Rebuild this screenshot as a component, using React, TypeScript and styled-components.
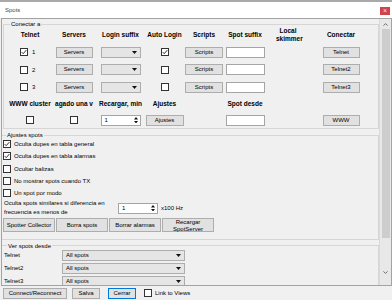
import React from 'react'
import styled, { createGlobalStyle } from 'styled-components'

const GlobalStyle = createGlobalStyle`
  html, body {
    margin: 0;
    padding: 0;
    background: #f0f0f0;
  }
  body {
    font-family: "Liberation Sans", Arial, sans-serif;
    font-size: 6px;
    color: #000;
  }
  * {
    box-sizing: border-box;
  }
`

const Check: React.FC = () => (
  <svg width="6" height="6" viewBox="0 0 6 6">
    <polyline points="0.7,3.1 2.2,4.7 5.3,1.1" fill="none" stroke="#1e1e1e" strokeWidth="0.9" />
  </svg>
)

const Arrow: React.FC<{ up?: boolean }> = ({ up }) => (
  <svg width="5" height="3" viewBox="0 0 5 3">
    <path d={up ? 'M0 3h5L2.5 0z' : 'M0 0h5L2.5 3z'} fill="#111" />
  </svg>
)

const Chevron: React.FC<{ up?: boolean }> = ({ up }) => (
  <svg width="5" height="3" viewBox="0 0 5 3">
    <polyline points={up ? '0.5,2.6 2.5,0.6 4.5,2.6' : '0.5,0.4 2.5,2.4 4.5,0.4'} fill="none" stroke="#606060" strokeWidth="0.9" />
  </svg>
)

const CheckBox: React.FC<{ checked?: boolean }> = ({ checked }) => <Box>{checked && <Check />}</Box>

const ComboBox: React.FC<{ w: number; value?: string }> = ({ w, value }) => (
  <Combo $w={w}>
    <span>{value}</span>
    <Arrow />
  </Combo>
)

const Numeric: React.FC<{ value: string }> = ({ value }) => (
  <NumericBox>
    <span>{value}</span>
    <Spinner>
      <Arrow up />
      <Arrow />
    </Spinner>
  </NumericBox>
)

const telnets = [
  { n: 1, on: true, auto: true },
  { n: 2, on: false, auto: false },
  { n: 3, on: false, auto: false },
]

const options = [
  { label: 'Oculta dupes en tabla general', checked: true },
  { label: 'Oculta dupes en tabla alarmas', checked: true },
  { label: 'Ocultar balizas', checked: false },
  { label: 'No mostrar spots cuando TX', checked: false },
  { label: 'Un spot por modo', checked: false },
]

const App: React.FC = () => (
  <Window>
    <GlobalStyle />
    <TitleBar>
      <span>Spots</span>
      <CloseButton>×</CloseButton>
    </TitleBar>

    <ScrollPanel>
      <Content>
        <ConnectGroup>
          <Legend $indent={2}>Conectar a</Legend>
          <ConnectGrid>
            <Header>Telnet</Header>
            <Header>Servers</Header>
            <Header>Login suffix</Header>
            <Header>Auto Login</Header>
            <Header>Scripts</Header>
            <Header>Spot suffix</Header>
            <Header $wrap>Local skimmer</Header>
            <Header>Conectar</Header>

            {telnets.map(t => (
              <React.Fragment key={t.n}>
                <TelnetCell>
                  <CheckBox checked={t.on} />
                  <span>{t.n}</span>
                </TelnetCell>
                <Button $w={37}>Servers</Button>
                <ComboBox w={40} />
                <CheckBox checked={t.auto} />
                <Button $w={38}>Scripts</Button>
                <TextBox $w={39} />
                <span />
                <Button $w={37}>{t.n === 1 ? 'Telnet' : `Telnet${t.n}`}</Button>
              </React.Fragment>
            ))}

            <Header>WWW cluster</Header>
            <Header>agado una v</Header>
            <Header>Recargar, min</Header>
            <Header>Ajustes</Header>
            <span />
            <Header>Spot desde</Header>
            <span />
            <span />

            <CheckBox />
            <CheckBox />
            <Numeric value="1" />
            <Button $w={38}>Ajustes</Button>
            <span />
            <TextBox $w={39} />
            <span />
            <Button $w={37}>WWW</Button>
          </ConnectGrid>
        </ConnectGroup>

        <FlatGroup $gap={3} $bottom={6}>
          <Legend $indent={3}>Ajustes spots</Legend>
          {options.map(o => (
            <CheckRow key={o.label}>
              <CheckBox checked={o.checked} />
              <span>{o.label}</span>
            </CheckRow>
          ))}
          <SimilarRow>
            <SimilarLabel>Oculta spots similares si diferencia en frecuencia es menos de</SimilarLabel>
            <Numeric value="1" />
            <span>x100 Hz</span>
          </SimilarRow>
          <ActionRow>
            <Button $w={52} $h={14}>Spotter Collector</Button>
            <Button $w={52} $h={14}>Borra spots</Button>
            <Button $w={52} $h={14}>Borrar alarmas</Button>
            <Button $w={52} $h={14}>Recargar SpotServer</Button>
          </ActionRow>
        </FlatGroup>

        <FlatGroup $gap={2.5} $bottom={0}>
          <Legend $indent={4}>Ver spots desde</Legend>
          {['Telnet', 'Telnet2', 'Telnet3'].map(name => (
            <SourceRow key={name}>
              <SourceLabel>{name}</SourceLabel>
              <ComboBox w={123} value="All spots" />
            </SourceRow>
          ))}
        </FlatGroup>
      </Content>

      <ScrollBar>
        <ScrollArrow>
          <Chevron up />
        </ScrollArrow>
        <Thumb />
        <Track />
        <ScrollArrow>
          <Chevron />
        </ScrollArrow>
      </ScrollBar>
    </ScrollPanel>

    <BottomBar>
      <Button $w={64}>Connect/Reconnect</Button>
      <Button $w={28} style={{ marginLeft: 5 }}>Salva</Button>
      <Button $w={28} $default style={{ marginLeft: 8 }}>Cerrar</Button>
      <LinkCheck>
        <CheckBox />
        <span>Link to Views</span>
      </LinkCheck>
    </BottomBar>
  </Window>
)

export default App

const Window = styled('div')`
  width: 392px;
  height: 300px;
  border-top: 2px solid #a9a9a9;
  background: #f0f0f0;
  display: flex;
  flex-direction: column;
  overflow: hidden;
`

const TitleBar = styled('div')`
  flex: none;
  height: 16px;
  background: #fff;
  color: #4a4a4a;
  display: flex;
  align-items: center;
  justify-content: space-between;
  padding: 0 2px 0 5px;
`

const CloseButton = styled('div')`
  width: 10px;
  height: 8px;
  margin-top: 2px;
  background: #cf434c;
  color: #fbe3e4;
  font-size: 7px;
  line-height: 8px;
  text-align: center;
`

const ScrollPanel = styled('div')`
  flex: none;
  height: 268px;
  margin-left: 1px;
  border: 1px solid #a3a3a3;
  display: flex;
`

const Content = styled('div')`
  flex: 1;
  min-width: 0;
  overflow: hidden;
  padding-top: 2px;
`

const ConnectGroup = styled('fieldset')`
  margin: 0 0 0 1px;
  padding: 0 0 0 4px;
  min-width: 0;
  border: 1px solid #d6d6d6;
`

const FlatGroup = styled('fieldset')<{ $gap: number; $bottom: number }>`
  margin: ${p => p.$gap}px 0 0 0;
  padding: 0 0 ${p => p.$bottom}px 1px;
  min-width: 0;
  border: 1px solid #d6d6d6;
  border-left: none;
`

const Legend = styled('legend')<{ $indent: number }>`
  margin-left: ${p => p.$indent}px;
  padding: 0 1px;
  line-height: 6px;
  font-size: 6px;
`

const ConnectGrid = styled('div')`
  display: grid;
  grid-template-columns: 44px 44px 49px 39px 40px 42px 44px 62px;
  grid-template-rows: 16px 18px 17px 18px 16px 16px;
  align-items: center;
  justify-items: center;
`

const Header = styled('div')<{ $wrap?: boolean }>`
  width: 100%;
  overflow: hidden;
  white-space: ${p => (p.$wrap ? 'normal' : 'nowrap')};
  text-align: center;
  font-weight: bold;
  font-size: 6.5px;
  line-height: 8px;
  padding: ${p => (p.$wrap ? '0 10px' : '0')};
`

const TelnetCell = styled('div')`
  justify-self: start;
  margin-left: 12px;
  display: flex;
  align-items: center;
  gap: 4px;
`

const Box = styled('span')`
  flex: none;
  width: 8px;
  height: 8px;
  border: 1px solid #333;
  background: #fff;
  display: inline-flex;
  align-items: center;
  justify-content: center;
`

const Button = styled('button')<{ $w: number; $h?: number; $default?: boolean }>`
  flex: none;
  width: ${p => p.$w}px;
  height: ${p => p.$h ?? 11}px;
  margin: 0;
  padding: 0;
  border: 1px solid ${p => (p.$default ? '#0078d7' : '#adadad')};
  background: #e1e1e1;
  color: #000;
  font: inherit;
  line-height: 6.5px;
`

const Combo = styled('div')<{ $w: number }>`
  width: ${p => p.$w}px;
  height: 11px;
  border: 1px solid #adadad;
  background: #e5e5e5;
  display: flex;
  align-items: center;
  justify-content: space-between;
  padding: 0 3px;
`

const TextBox = styled('div')<{ $w: number }>`
  width: ${p => p.$w}px;
  height: 11px;
  border: 1px solid #a5a5a5;
  background: #fff;
`

const NumericBox = styled('div')`
  width: 40px;
  height: 11px;
  border: 1px solid #a5a5a5;
  background: #fff;
  display: flex;
  align-items: center;
  justify-content: space-between;
  padding: 0 2px 0 3px;
`

const Spinner = styled('div')`
  display: flex;
  flex-direction: column;
  gap: 1px;

  & > svg {
    width: 4px;
    height: 2.5px;
  }
`

const CheckRow = styled('div')`
  height: 12.3px;
  display: flex;
  align-items: center;
  gap: 3px;
`

const SimilarRow = styled('div')`
  height: 18px;
  display: flex;
  align-items: center;
  gap: 3px;
`

const SimilarLabel = styled('div')`
  width: 112px;
  line-height: 9px;
  padding-left: 1px;
`

const ActionRow = styled('div')`
  height: 16px;
  display: flex;
  align-items: center;
  gap: 1px;
`

const SourceRow = styled('div')`
  height: 13px;
  display: flex;
  align-items: center;
`

const SourceLabel = styled('div')`
  width: 59px;
  padding-left: 1px;
`

const ScrollBar = styled('div')`
  flex: none;
  width: 12px;
  background: #e8e8e8;
  border-left: 1px solid #dadada;
  display: flex;
  flex-direction: column;
  align-items: center;
  padding-bottom: 8px;
`

const ScrollArrow = styled('div')`
  height: 10px;
  display: flex;
  align-items: center;
  justify-content: center;
`

const Thumb = styled('div')`
  width: 8px;
  height: 209px;
  background: #cdcdcd;
`

const Track = styled('div')`
  flex: 1;
`

const BottomBar = styled('div')`
  flex: 1;
  display: flex;
  align-items: center;
  padding-left: 3px;
`

const LinkCheck = styled('div')`
  margin-left: 8px;
  display: flex;
  align-items: center;
  gap: 3px;
`
